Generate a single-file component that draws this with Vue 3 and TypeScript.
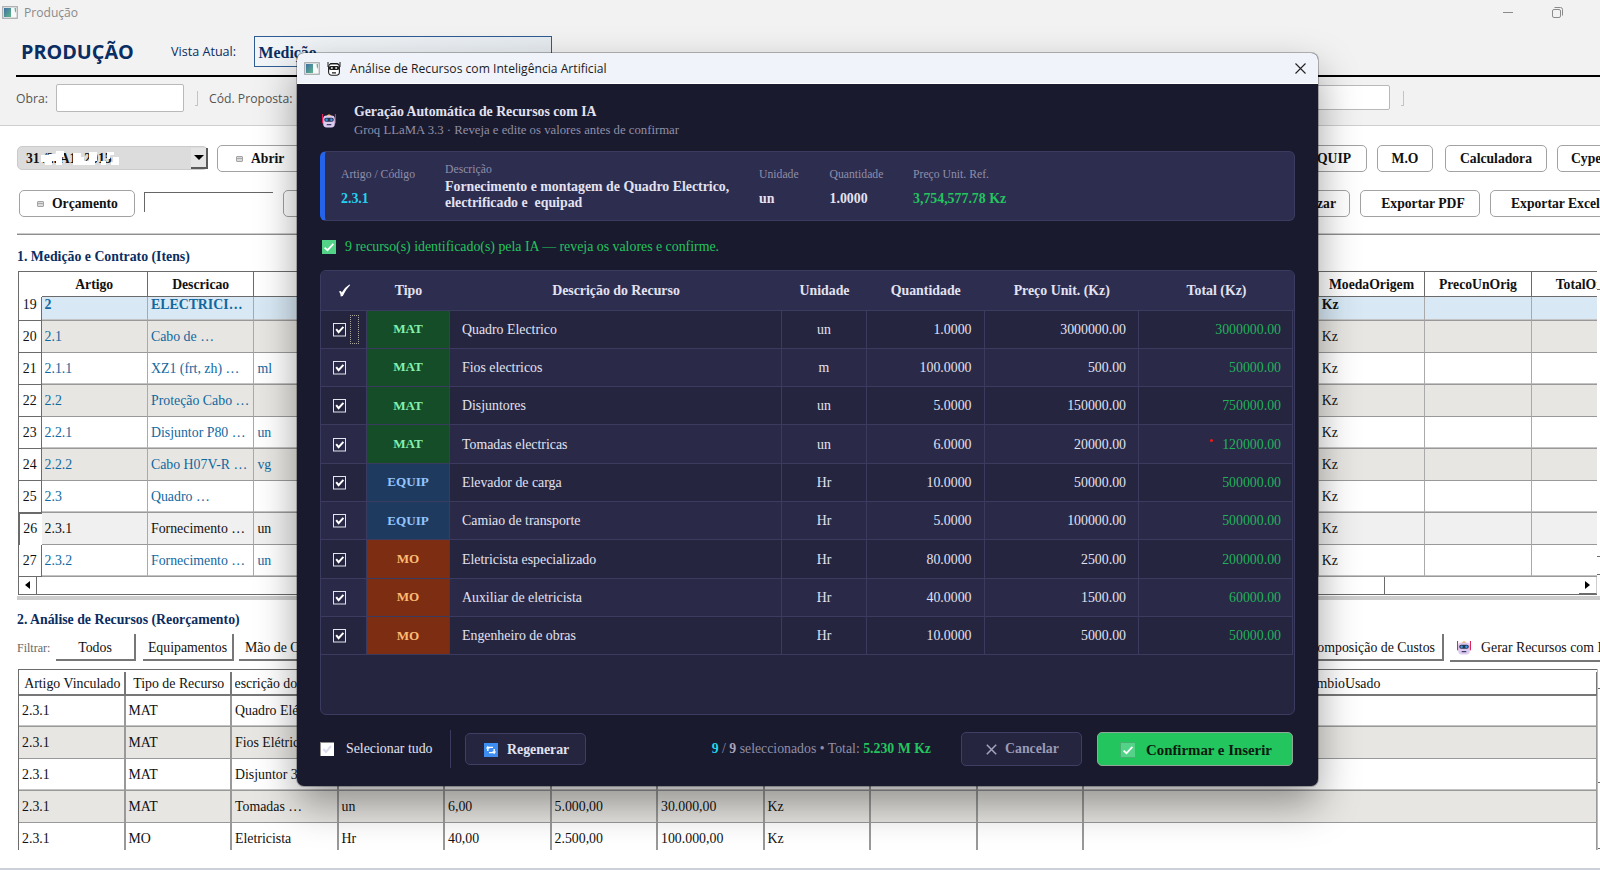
<script setup lang="ts">
interface MeasureRow {
  n: number
  artigo: string
  descricao: string
  unidade: string
  kind?: 'group' | 'current'
}

interface ResourceRow {
  tipo: 'MAT' | 'EQUIP' | 'MO'
  descricao: string
  unidade: string
  quantidade: string
  preco: string
  total: string
  flagged?: boolean
}

const measureHeaders: string[] = ['Artigo', 'Descricao', '', '', '', '', '', '', '', '', '', '', 'MoedaOrigem', 'PrecoUnOrig', 'TotalOrig']

const measureRows: MeasureRow[] = [
  { n: 19, artigo: '2', descricao: 'ELECTRICI…', unidade: '', kind: 'group' },
  { n: 20, artigo: '2.1', descricao: 'Cabo de …', unidade: '' },
  { n: 21, artigo: '2.1.1', descricao: 'XZ1 (frt, zh) …', unidade: 'ml' },
  { n: 22, artigo: '2.2', descricao: 'Proteção Cabo …', unidade: '' },
  { n: 23, artigo: '2.2.1', descricao: 'Disjuntor P80 …', unidade: 'un' },
  { n: 24, artigo: '2.2.2', descricao: 'Cabo H07V-R …', unidade: 'vg' },
  { n: 25, artigo: '2.3', descricao: 'Quadro …', unidade: '' },
  { n: 26, artigo: '2.3.1', descricao: 'Fornecimento …', unidade: 'un', kind: 'current' },
  { n: 27, artigo: '2.3.2', descricao: 'Fornecimento …', unidade: 'un' },
]

const analysisHeaders: string[] = ['Artigo Vinculado', 'Tipo de Recurso', 'Descrição do Recurso', '', '', '', '', '', '', '', 'CambioUsado']

const analysisRows: string[][] = [
  ['2.3.1', 'MAT', 'Quadro Elétrico', '', '', '', '', '', '', '', ''],
  ['2.3.1', 'MAT', 'Fios Elétricos', '', '', '', '', '', '', '', ''],
  ['2.3.1', 'MAT', 'Disjuntor 3P', '', '', '', '', '', '', '', ''],
  ['2.3.1', 'MAT', 'Tomadas …', 'un', '6,00', '5.000,00', '30.000,00', 'Kz', '', '', ''],
  ['2.3.1', 'MO', 'Eletricista', 'Hr', '40,00', '2.500,00', '100.000,00', 'Kz', '', '', ''],
]

const resourceRows: ResourceRow[] = [
  { tipo: 'MAT', descricao: 'Quadro Electrico', unidade: 'un', quantidade: '1.0000', preco: '3000000.00', total: '3000000.00' },
  { tipo: 'MAT', descricao: 'Fios electricos', unidade: 'm', quantidade: '100.0000', preco: '500.00', total: '50000.00' },
  { tipo: 'MAT', descricao: 'Disjuntores', unidade: 'un', quantidade: '5.0000', preco: '150000.00', total: '750000.00' },
  { tipo: 'MAT', descricao: 'Tomadas electricas', unidade: 'un', quantidade: '6.0000', preco: '20000.00', total: '120000.00', flagged: true },
  { tipo: 'EQUIP', descricao: 'Elevador de carga', unidade: 'Hr', quantidade: '10.0000', preco: '50000.00', total: '500000.00' },
  { tipo: 'EQUIP', descricao: 'Camiao de transporte', unidade: 'Hr', quantidade: '5.0000', preco: '100000.00', total: '500000.00' },
  { tipo: 'MO', descricao: 'Eletricista especializado', unidade: 'Hr', quantidade: '80.0000', preco: '2500.00', total: '200000.00' },
  { tipo: 'MO', descricao: 'Auxiliar de eletricista', unidade: 'Hr', quantidade: '40.0000', preco: '1500.00', total: '60000.00' },
  { tipo: 'MO', descricao: 'Engenheiro de obras', unidade: 'Hr', quantidade: '10.0000', preco: '5000.00', total: '50000.00' },
]

function measureCell(row: MeasureRow, index: number): string {
  if (index === 0) return row.artigo
  if (index === 1) return row.descricao
  if (index === 2) return row.unidade
  if (index === 12) return 'Kz'
  return ''
}
</script>

<template>
  <div class="screen">
    <svg class="defs" width="0" height="0">
      <defs>
        <linearGradient id="appGrad" x1="0" y1="0" x2="1" y2="1">
          <stop offset="0" stop-color="#3f6fa5" />
          <stop offset="1" stop-color="#5fb58a" />
        </linearGradient>
        <symbol id="appIcon" viewBox="0 0 16 13">
          <rect x="0.75" y="0.75" width="14.5" height="11.5" fill="#f7f9fa" stroke="#a3a7aa" stroke-width="1.2" />
          <rect x="2" y="2" width="7" height="9" fill="url(#appGrad)" />
          <path d="M12.5 2H14V7L12.8 5Z" fill="#69b59b" />
        </symbol>
        <symbol id="robot" viewBox="0 0 14 15">
          <rect x="0" y="1" width="1.1" height="5" fill="#e0245e" />
          <rect x="12.9" y="1" width="1.1" height="5" fill="#e0245e" />
          <rect x="0" y="5" width="1.6" height="5.5" rx="0.8" fill="#e0245e" />
          <rect x="12.4" y="5" width="1.6" height="5.5" rx="0.8" fill="#e0245e" />
          <path d="M4.5 3.2Q7 -0.6 9.5 3.2Z" fill="#f0a93a" />
          <rect x="1.2" y="2.6" width="11.6" height="11.8" rx="3.4" fill="#dccbf0" />
          <rect x="2.2" y="4.8" width="9.6" height="4" rx="2" fill="#2a3350" />
          <circle cx="4.6" cy="6.7" r="1.2" fill="#3a9be8" />
          <circle cx="9.4" cy="6.7" r="1.2" fill="#3a9be8" />
          <rect x="4.6" y="11" width="4.8" height="1.3" rx="0.6" fill="#423a63" />
        </symbol>
        <symbol id="check" viewBox="0 0 14 14">
          <rect x="0" y="0" width="14" height="14" fill="#53d387" />
          <path d="M2.6 7.6L5.5 10.2L11.4 3.8" fill="none" stroke="#fff" stroke-width="1.7" />
        </symbol>
      </defs>
    </svg>

    <div class="titlebar">
      <svg class="app-icon" width="16" height="13"><use href="#appIcon" /></svg>
      <span class="titlebar-text">Produção</span>
      <svg class="win-controls" width="64" height="14" viewBox="0 0 64 14" fill="none" stroke="#8b8b8b">
        <path d="M1 6.5H11" />
        <rect x="50.5" y="3.5" width="8" height="8" rx="1.5" />
        <path d="M52.5 1.5H58.5Q60.5 1.5 60.5 3.5V9.5" />
      </svg>
    </div>

    <div class="header">
      <span class="brand">PRODUÇÃO</span>
      <span class="view-label">Vista Atual:</span>
      <div class="view-combo">Medição</div>
    </div>

    <div class="filters">
      <span class="filter-label">Obra:</span>
      <div class="filter-input"></div>
      <i class="sep"></i>
      <span class="filter-label proposal">Cód. Proposta:</span>
      <div class="filter-input wide"></div>
      <i class="sep"></i>
    </div>

    <div class="toolbar first">
      <div class="tool-left">
        <div class="combo">
          <span>31 /2. A1.-2015</span>
          <svg class="mask" width="100" height="22" viewBox="0 0 100 22" fill="#fff">
            <path d="M18 7h8v-1h7v7h-4v4h-7v-3h-4zM33 3h8v6h-2v8h-6v-6h-1zM50 5h8v4h3v8h-11zM60 13h6v-9h8v9h-2v4h-12zM84 4h7v3h-4v4h-3zM78 13h5v4h-5zM90 9h6v8h-8v-3h2z" />
          </svg>
          <i class="drop"></i>
        </div>
        <button class="tool open"><i class="mini"></i>Abrir</button>
      </div>
      <button class="tool equip">EQUIP</button>
      <button class="tool mo">M.O</button>
      <button class="tool calc">Calculadora</button>
      <button class="tool cype">Cype</button>
    </div>

    <div class="toolbar second">
      <div class="tool-left">
        <button class="tool budget"><i class="mini"></i>Orçamento</button>
        <div class="sunken"></div>
        <button class="tool blank"></button>
      </div>
      <button class="tool update">Atualizar</button>
      <button class="tool pdf">Exportar PDF</button>
      <button class="tool excel">Exportar Excel</button>
    </div>

    <div class="rule"></div>
    <h2 class="section-title">1. Medição e Contrato (Itens)</h2>

    <div class="split">
      <div class="grid measure">
        <div class="grid-head measure-cols">
          <span></span>
          <span v-for="(h, i) in measureHeaders" :key="i" class="head-cell">{{ h }}</span>
        </div>
        <div v-for="row in measureRows" :key="row.n" class="grid-row measure-cols" :class="row.kind">
          <span class="row-no">{{ row.n }}</span>
          <span v-for="(h, i) in measureHeaders" :key="i" class="cell" :class="{ ink: i > 2 }">{{ measureCell(row, i) }}</span>
        </div>
        <div class="hscroll">
          <i class="arrow left"></i>
          <i class="thumb"></i>
          <i class="arrow right"></i>
        </div>
      </div>
      <div class="edge first-edge"><i></i><i></i><i></i></div>
    </div>

    <div class="band"></div>
    <h2 class="section-title second-title">2. Análise de Recursos (Reorçamento)</h2>

    <div class="analysis-tools">
      <span class="filtrar">Filtrar:</span>
      <div class="raised todos">Todos</div>
      <div class="raised equips">Equipamentos</div>
      <div class="raised labour">Mão de Obra</div>
      <div class="raised costs">Composição de Custos</div>
      <div class="raised generate"><svg width="14" height="15"><use href="#robot" /></svg>Gerar Recursos com IA</div>
    </div>

    <div class="split">
      <div class="grid analysis">
        <div class="grid-head analysis-cols">
          <span v-for="(h, i) in analysisHeaders" :key="i" class="head-cell"><em>{{ h }}</em></span>
        </div>
        <div v-for="(row, r) in analysisRows" :key="r" class="grid-row analysis-cols">
          <span v-for="(c, i) in row" :key="i" class="cell">{{ c }}</span>
        </div>
      </div>
      <div class="edge second-edge"><i></i><i></i><i></i></div>
    </div>
    <div class="status-line"></div>

    <section class="dialog">
      <header class="dialog-title">
        <svg class="app-icon" width="16" height="13"><use href="#appIcon" /></svg>
        <svg class="mono-robot" width="14" height="15" viewBox="0 0 14 15" fill="none" stroke="#1c1c1c">
          <path d="M1 1V6M13 1V6" />
          <rect x="1.6" y="2.6" width="10.8" height="11.6" rx="3.2" fill="#fff" stroke-width="1.1" />
          <path d="M3.4 2.6H10.6" stroke-width="1.4" />
          <rect x="1.6" y="5" width="10.8" height="4" rx="2" fill="#1c1c1c" stroke="none" />
          <path d="M3.9 7H5.7M8.3 7H10.1" stroke="#fff" stroke-width="1.3" />
          <path d="M5 11.8H9" stroke-width="1.2" />
        </svg>
        <span class="dialog-name">Análise de Recursos com Inteligência Artificial</span>
        <svg class="close" width="11" height="11" viewBox="0 0 11 11" fill="none" stroke="#222" stroke-width="1.1">
          <path d="M0.5 0.5L10.5 10.5M10.5 0.5L0.5 10.5" />
        </svg>
      </header>

      <div class="dialog-body">
        <div class="intro">
          <svg width="14" height="15"><use href="#robot" /></svg>
          <div>
            <h1>Geração Automática de Recursos com IA</h1>
            <p>Groq LLaMA 3.3 · Reveja e edite os valores antes de confirmar</p>
          </div>
        </div>

        <div class="info">
          <div class="field code"><label>Artigo / Código</label><b class="cyan">2.3.1</b></div>
          <div class="field desc"><label>Descrição</label><b>Fornecimento e montagem de Quadro Electrico,<br />electrificado e&nbsp; equipad</b></div>
          <div class="field unit"><label>Unidade</label><b>un</b></div>
          <div class="field qty"><label>Quantidade</label><b>1.0000</b></div>
          <div class="field price"><label>Preço Unit. Ref.</label><b class="green">3,754,577.78 Kz</b></div>
        </div>

        <div class="found">
          <svg width="14" height="14"><use href="#check" /></svg>
          <span>9 recurso(s) identificado(s) pela IA — reveja os valores e confirme.</span>
        </div>

        <div class="res-table">
          <div class="res-row res-head">
            <span><svg width="13" height="13" viewBox="0 0 13 13"><path d="M1 7.6Q2.6 6.2 3.8 8.4Q6.2 3.6 11.4 0.4L12.2 1Q7.8 5.4 4.8 12L2.7 12.4Q2.4 9.2 1 7.6Z" fill="#fff" /></svg></span>
            <span>Tipo</span>
            <span>Descrição do Recurso</span>
            <span>Unidade</span>
            <span>Quantidade</span>
            <span>Preço Unit. (Kz)</span>
            <span>Total (Kz)</span>
          </div>
          <div v-for="(r, i) in resourceRows" :key="i" class="res-row">
            <span class="tick">
              <svg width="14" height="14" viewBox="0 0 14 14" fill="none">
                <rect x="0.5" y="0.5" width="12" height="12.5" stroke="#e4e4ee" />
                <path d="M3.2 6.2L5.6 9.2L10.4 3.8" stroke="#fff" stroke-width="2" />
              </svg>
              <i v-if="i === 0" class="focus"></i>
            </span>
            <span class="type" :class="r.tipo.toLowerCase()">{{ r.tipo }}</span>
            <span class="name">{{ r.descricao }}</span>
            <span class="center">{{ r.unidade }}</span>
            <span class="num">{{ r.quantidade }}</span>
            <span class="num">{{ r.preco }}</span>
            <span class="num total"><i v-if="r.flagged" class="dot"></i>{{ r.total }}</span>
          </div>
        </div>

        <footer class="actions">
          <svg class="all-box" width="14" height="14" viewBox="0 0 14 14">
            <rect width="14" height="14" fill="#fff" />
            <path d="M0 14V0H14" fill="none" stroke="#8e8b88" stroke-width="2" />
            <path d="M3.4 7L6 10L11 4" fill="none" stroke="#dcdcee" stroke-width="2" />
          </svg>
          <span class="all-label">Selecionar tudo</span>
          <i class="vbar"></i>
          <button class="btn regen">
            <svg width="14" height="14" viewBox="0 0 14 14">
              <rect width="14" height="14" fill="#3d8ef0" />
              <path d="M3.8 8V6Q3.8 4.4 5.4 4.4H9M10.2 6V8Q10.2 9.6 8.6 9.6H5" fill="none" stroke="#fff" stroke-width="1.4" />
              <path d="M1.8 5.6L3.8 2.8L6 5.6ZM8 8.4H12.2L10.1 11.2Z" fill="#fff" />
            </svg>
            Regenerar
          </button>
          <span class="count"><b class="cyan">9</b> / <b>9</b> seleccionados • Total: <b class="green">5.230 M Kz</b></span>
          <button class="btn cancel">
            <svg width="11" height="11" viewBox="0 0 11 11"><path d="M0.8 0.8L10.2 10.2M10.2 0.8L0.8 10.2" stroke="#a5a5bd" stroke-width="1.5" /></svg>
            Cancelar
          </button>
          <button class="btn confirm">
            <svg width="14" height="14"><use href="#check" /></svg>
            Confirmar e Inserir
          </button>
        </footer>
      </div>
    </section>
  </div>
</template>

<style>
body {
  margin: 0;
  overflow: hidden;
}
</style>

<style scoped>
.screen {
  position: relative;
  display: flex;
  flex-direction: column;
  width: 1600px;
  height: 870px;
  overflow: hidden;
  background: #fff;
  color: #111;
  font: 13.85px/18px 'Liberation Serif', 'Times New Roman', serif;
}
.screen * {
  box-sizing: border-box;
}
.defs {
  position: absolute;
}
svg,
button {
  flex: none;
}
button {
  margin: 0;
  padding: 0;
  color: inherit;
  font: inherit;
  white-space: nowrap;
}

.titlebar {
  flex: none;
  display: flex;
  align-items: center;
  height: 25px;
  padding: 0 35px 0 2px;
  background: #f2f2f2;
  color: #8a8a8a;
  font: 12.1px/18px 'Open Sans', 'Noto Sans', sans-serif;
}
.titlebar-text {
  margin-left: 6px;
}
.win-controls {
  margin-left: auto;
  margin-right: -1px;
}
.header {
  flex: none;
  display: flex;
  align-items: center;
  height: 52px;
  padding: 1px 0 0 21px;
  background: linear-gradient(#000, #000) 16px 100% / 1584px 2px no-repeat #f2f2f2;
  color: #0a2d62;
  font-family: 'Open Sans', 'Noto Sans', sans-serif;
}
.brand {
  width: 150px;
  font-size: 19.8px;
  font-weight: 700;
}
.view-label {
  width: 82.5px;
  font-size: 12.6px;
}
.view-combo {
  width: 298px;
  height: 31px;
  margin-top: -1px;
  padding-left: 4px;
  border: 1px solid #2f5c93;
  background: linear-gradient(90deg, #f2f5f7, #e6ebf0);
  font: bold 15.9px/31px 'Liberation Serif', serif;
}
.filters {
  flex: none;
  display: flex;
  align-items: flex-start;
  height: 49px;
  padding: 7px 0 0 16px;
  border-bottom: 1px solid #cfcfcf;
  background: #f2f2f2;
  color: #555;
  font: 12.2px/30px 'Open Sans', 'Noto Sans', sans-serif;
}
.filter-label {
  width: 40px;
  white-space: nowrap;
}
.filter-input {
  width: 128px;
  height: 28px;
  border: 1px solid #b9b9b9;
  border-radius: 2px;
  background: #fff;
}
.filter-input.wide {
  width: 1090px;
  height: 25px;
  margin-top: 1px;
}
.sep {
  width: 3px;
  height: 15px;
  margin: 7px 10px 0 11px;
  border-right: 1px solid #c4c4c4;
  border-bottom: 1px solid #c4c4c4;
}
.filter-label.proposal {
  width: 92px;
  padding-left: 1px;
}

.toolbar {
  flex: none;
  display: flex;
  align-items: flex-start;
  overflow: hidden;
  font-weight: 700;
  font-size: 13.65px;
}
.toolbar.first {
  height: 64px;
  padding: 19px 0 0 17px;
}
.toolbar.second {
  height: 43px;
}
.tool-left {
  flex: 0 0 1272px;
  display: flex;
}
.toolbar.second .tool-left {
  flex-basis: 1250px;
  padding-left: 19px;
}
.combo {
  position: relative;
  display: flex;
  align-items: center;
  justify-content: space-between;
  width: 191px;
  height: 24px;
  margin-top: 1px;
  padding-top: 1px;
  padding-left: 8px;
  border: 1px solid #cbcbcb;
  border-radius: 5px;
  background: #dcdcdc;
}
.mask {
  position: absolute;
  left: 5px;
  top: 1px;
}
.drop {
  display: flex;
  align-items: center;
  justify-content: center;
  width: 17px;
  height: 21px;
  margin-right: -1px;
  border-right: 2px solid #5a5a5a;
  border-bottom: 2px solid #5a5a5a;
  background: #e4e4e4;
}
.drop::after {
  content: '';
  border: 5px solid transparent;
  border-top-color: #000;
  border-bottom: 0;
}
.tool {
  height: 27px;
  border: 1px solid #a2a2a2;
  border-radius: 5px;
  background: #fff;
}
.mini {
  display: inline-block;
  width: 7px;
  height: 6px;
  margin-right: 8px;
  border: 1px solid #a3a3a3;
  border-radius: 1px;
  background: linear-gradient(#dadada 0 1px, #aaa 1px 2px, #dadada 2px);
  vertical-align: 1px;
}
.open {
  width: 110px;
  margin-left: 9px;
  padding-left: 18px;
  text-align: left;
}
.budget {
  width: 116px;
  padding-left: 17px;
  text-align: left;
}
.sunken {
  width: 129px;
  height: 20px;
  margin: 2px 10px 0 9px;
  border-top: 1px solid #666;
  border-left: 1px solid #666;
}
.blank {
  width: 120px;
}
.equip {
  width: 78px;
  padding-left: 3px;
}
.mo {
  width: 56px;
  margin-left: 10px;
}
.calc {
  width: 102px;
  margin-left: 12px;
}
.cype {
  width: 80px;
  margin-left: 10px;
  padding-left: 13px;
  text-align: left;
}
.update {
  width: 100px;
  padding-right: 13px;
  text-align: right;
}
.pdf {
  width: 120px;
  margin-left: 10px;
  padding-left: 6px;
}
.excel {
  width: 140px;
  margin-left: 10px;
  padding-left: 20px;
  text-align: left;
}
.rule {
  flex: none;
  height: 2px;
  margin-left: 17px;
  border-top: 1px solid #ccc;
  border-bottom: 1px solid #8f8f8f;
}
.section-title {
  flex: none;
  height: 36px;
  margin: 0;
  padding: 13px 0 0 17px;
  color: #0a2d62;
  font-size: 13.8px;
  line-height: 18px;
}

.split {
  flex: none;
  display: flex;
}
.grid {
  width: 1579px;
  margin-left: 18px;
  overflow: hidden;
  border-top: 1px solid #6b6b6b;
  border-left: 1px solid #6b6b6b;
}
.measure-cols {
  display: grid;
  grid-template-columns: 22.5px repeat(15, 106.45px);
}
.measure .grid-head {
  height: 25px;
  font-weight: 700;
  font-size: 13.7px;
}
.head-cell {
  display: flex;
  align-items: center;
  justify-content: center;
  overflow: hidden;
  border-right: 1px solid #6b6b6b;
  border-bottom: 1px solid #6b6b6b;
}
.measure .head-cell {
  padding-top: 2px;
}
.grid-row {
  height: 31.95px;
  overflow: hidden;
}
.cell {
  display: flex;
  align-items: center;
  height: 31.95px;
  padding-top: 1px;
  padding-left: 3px;
  border-right: 1px solid #aaa;
  border-bottom: 1px solid #999;
  white-space: nowrap;
  overflow: hidden;
}
.grid-row:nth-child(even) .cell {
  box-shadow: inset 0 -1px #c4c4c4;
}
.measure .cell {
  color: #11689f;
}
.measure .cell.ink,
.measure .current .cell {
  color: #111;
}
.measure .grid-row:nth-child(odd) .cell {
  background: #e8e6e2;
}
.measure .grid-row.current .cell {
  background: #f0f0f0;
}
.measure .grid-row.group {
  height: 24px;
  align-content: end;
  font-weight: 700;
}
.measure .group .cell {
  background: #d8e9f5;
}
.row-no {
  display: flex;
  align-items: center;
  justify-content: center;
  height: 31.95px;
  padding-top: 1px;
  border-right: 1px solid #6b6b6b;
  border-bottom: 1px solid #6b6b6b;
  font-weight: 400;
}
.current .row-no {
  padding: 0 1px 0 0;
  border-top: 1px solid #6b6b6b;
  border-left: 1px solid #6b6b6b;
  border-right: 0;
  border-bottom: 0;
}
.hscroll {
  display: flex;
  align-items: center;
  height: 18px;
  border-bottom: 1px solid #6b6b6b;
}
.arrow {
  flex: none;
  display: flex;
  align-items: center;
  justify-content: center;
  width: 18px;
  height: 17px;
  border-right: 1px solid #6b6b6b;
}
.arrow::after {
  content: '';
  border: 4px solid transparent;
}
.arrow.left::after {
  border-right: 5px solid #000;
  border-left: 0;
}
.arrow.right::after {
  border-left: 5px solid #000;
  border-right: 0;
}
.arrow.right {
  margin-left: auto;
  border-bottom: 1px solid #6b6b6b;
  border-right-color: #ccc;
}
.thumb {
  width: 1348px;
  height: 17px;
  border-right: 1px solid #6b6b6b;
}
.edge {
  display: flex;
  flex-direction: column;
  width: 3px;
}
.edge i {
  flex: none;
  border-bottom: 1px solid #6b6b6b;
}
.first-edge i:nth-child(1) {
  height: 19px;
}
.first-edge i:nth-child(2) {
  height: 267px;
}
.first-edge i:nth-child(3) {
  height: 18px;
}
.band {
  flex: none;
  height: 4px;
  margin: 1px 0 0 17px;
  background: #cdcdcd;
}
.second-title {
  height: 34px;
  padding-top: 11px;
}

.analysis-tools {
  flex: none;
  display: flex;
  height: 35px;
  padding-left: 17px;
  overflow: hidden;
  line-height: 28px;
  white-space: nowrap;
}
.filtrar {
  flex: none;
  width: 39px;
  color: #666;
  font-size: 12px;
}
.raised {
  flex: none;
  height: 27px;
  border-right: 2px solid #777;
  border-bottom: 2px solid #777;
  text-align: center;
}
.todos {
  width: 80px;
}
.equips {
  width: 91px;
  margin-left: 7px;
}
.labour {
  width: 90px;
  margin-left: 5px;
  padding-left: 6px;
  text-align: left;
}
.costs {
  width: 160px;
  margin-left: 955px;
  padding-right: 7px;
  text-align: right;
}
.generate {
  display: flex;
  align-items: center;
  gap: 10px;
  width: 180px;
  height: 28px;
  margin-left: 6px;
  padding: 2px 0 0 7px;
}

.analysis-cols {
  display: grid;
  grid-template-columns: 106.5px repeat(9, 106.5px) 513.5px;
}
.analysis .grid-head {
  height: 26px;
  padding-top: 2px;
}
.analysis .head-cell {
  padding: 3px 1px 0 3px;
  border-width: 0 2px 2px 0;
  border-style: solid;
  border-color: #777;
}
.head-cell em {
  display: flex;
  justify-content: center;
  width: 100%;
  overflow: hidden;
  font-style: normal;
  white-space: nowrap;
}
.analysis .cell {
  padding-top: 0;
  border-right: 2px solid #999;
}
.analysis .grid-row:nth-child(odd) .cell {
  background: #e8e6e2;
}
.analysis .grid-row:last-child {
  height: 27px;
}
.second-edge {
  border-left: 1px solid #bbb;
}
.second-edge i:nth-child(1) {
  height: 20px;
}
.second-edge i:nth-child(2) {
  height: 94px;
}
.second-edge i:nth-child(3) {
  height: 66px;
}
.status-line {
  flex: none;
  height: 2px;
  margin-top: auto;
  background: #ccd0d9;
}

.dialog {
  position: absolute;
  left: 297px;
  top: 53px;
  display: flex;
  flex-direction: column;
  width: 1021px;
  height: 733px;
  overflow: hidden;
  border-radius: 7px;
  background: #1a1a2e;
  box-shadow: 0 0 0 1px rgba(0, 0, 0, 0.25), 0 18px 40px rgba(0, 0, 0, 0.38);
  color: #e2e2f0;
}
.dialog-title {
  flex: none;
  display: flex;
  align-items: center;
  height: 31px;
  padding: 0 12px 0 7px;
  border-bottom: 1px solid #fff;
  background: #f0f3fa;
  color: #1c1c1c;
  font: 12.14px/18px 'Open Sans', 'Noto Sans', sans-serif;
}
.dialog-name {
  padding-top: 1px;
}
.mono-robot {
  margin: 1px 9px 0 7px;
}
.close {
  margin-left: auto;
}
.dialog-body {
  flex: 1;
  display: flex;
  flex-direction: column;
  padding: 19px 23px 0;
}
.intro {
  flex: none;
  display: flex;
  height: 48px;
}
.intro > svg {
  margin: 10px 18px 0 2px;
}
h1,
p {
  margin: 0;
}
h1 {
  font-size: 13.8px;
  line-height: 18px;
}
p {
  color: #8f8fa8;
  font-size: 12.75px;
  line-height: 18px;
}
.info {
  flex: none;
  display: flex;
  align-items: center;
  height: 70px;
  padding-left: 16px;
  border: 1px solid #3b3b60;
  border-left: 5px solid #2563eb;
  border-radius: 6px;
  background: #2d2d50;
}
.field {
  display: flex;
  flex-direction: column;
  gap: 7px;
  padding-top: 3px;
  white-space: nowrap;
}
.field label {
  color: #8f8fa8;
  font-size: 11.7px;
  line-height: 16px;
}
.field b {
  line-height: 18px;
}
.code {
  width: 104px;
}
.desc {
  width: 314px;
  gap: 1px;
  padding-top: 1px;
}
.desc b {
  line-height: 16px;
}
.unit {
  width: 70.5px;
}
.qty {
  width: 83.5px;
}
.cyan {
  color: #22d3ee;
}
.green {
  color: #22c55e;
}
.found {
  flex: none;
  display: flex;
  align-items: center;
  gap: 9px;
  height: 49px;
  padding: 2px 0 0 2px;
  color: #22c55e;
  font-size: 13.85px;
}
.found span {
  padding-top: 1px;
}

.res-table {
  flex: none;
  height: 445px;
  border: 1px solid #3b3b60;
  border-radius: 6px;
  overflow: hidden;
  background: #252540;
}
.res-row {
  display: grid;
  grid-template-columns: 46px 83px 332px 85px 117.5px 154.5px 1fr;
  height: 38.33px;
  margin-right: 1px;
}
.res-row > span {
  display: flex;
  align-items: center;
  padding-top: 1px;
  border-right: 1px solid #3b3b60;
  border-bottom: 1px solid #3b3b60;
}
.res-row:nth-child(odd) {
  background: #2a2a48;
}
.res-head.res-row {
  height: 39.5px;
  margin-right: 0;
  border-bottom: 1px solid #3b3b60;
  background: #2d2d50;
  font-weight: 700;
}
.res-head > span {
  justify-content: center;
  border: 0;
}
.res-row > .tick {
  padding: 1px 0 0 12px;
}
.focus {
  width: 9px;
  height: 29px;
  margin-left: 3px;
  margin-top: -1px;
  border: 1px dotted #aaa89c;
}
.res-row > .type {
  justify-content: center;
  padding-top: 0;
  font-weight: 700;
  font-size: 13.1px;
}
.mat {
  background: #144d28;
  color: #86efac;
}
.equip.type {
  width: auto;
  padding-left: 0;
  background: #1e3a5f;
  color: #93c5fd;
}
.mo.type {
  width: auto;
  margin: 0;
  background: #7c2d12;
  color: #fdba74;
}
.name {
  padding-left: 12px;
}
.center {
  justify-content: center;
}
.num {
  justify-content: flex-end;
  padding-right: 12px;
}
.num.total {
  padding-right: 11px;
  color: #22b35a;
}
.dot {
  width: 3px;
  height: 3px;
  margin: 0 9px 8px 0;
  border-radius: 50%;
  background: #f01818;
}

.actions {
  flex: none;
  display: flex;
  align-items: center;
  height: 68px;
  white-space: nowrap;
}
.all-label {
  width: 104px;
  margin-left: 12px;
}
.vbar {
  width: 1px;
  height: 38px;
  background: #3b3b60;
}
.btn {
  display: flex;
  align-items: center;
  border: 1px solid #3f3f66;
  border-radius: 5px;
  background: #252540;
  font-weight: 700;
}
.regen {
  width: 121px;
  height: 32px;
  gap: 9px;
  margin-left: 14px;
  padding: 2px 0 0 18px;
}
.count {
  margin-left: auto;
  margin-right: 30px;
  color: #8f8fa8;
  font-size: 13.8px;
}
.count b:not([class]) {
  color: #a5a5bd;
}
.cancel {
  width: 121px;
  height: 34px;
  gap: 8px;
  padding-left: 24px;
  color: #9a9ab4;
}
.confirm {
  width: 196px;
  height: 34px;
  gap: 11px;
  margin: 0 2px 0 15px;
  padding: 2px 0 0 23px;
  border-color: #8fa898;
  background: #22c55e;
  color: #0b1a10;
  font-size: 14.85px;
}
.confirm svg {
  outline: 1px solid #46b070;
}
</style>
